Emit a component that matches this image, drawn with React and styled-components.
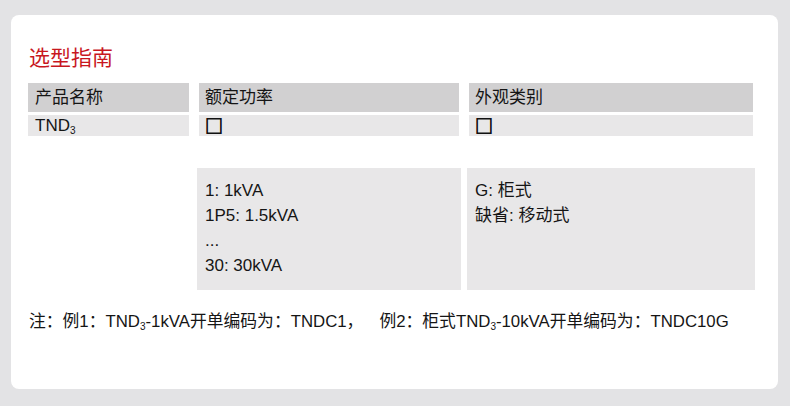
import React from "react";
import styled, { createGlobalStyle } from "styled-components";

const Global = createGlobalStyle`
  html, body {
    margin: 0;
    padding: 0;
    background: #e3e3e5;
  }
  body {
    font-family: "Liberation Sans", "Noto Sans CJK SC", sans-serif;
    color: #151515;
  }
`;

const Page = styled.div`
  width: 790px;
  height: 406px;
  box-sizing: border-box;
  padding: 15px 12px 17px 11px;
`;

const Card = styled.div`
  height: 100%;
  box-sizing: border-box;
  background: #fff;
  border-radius: 8px;
  padding: 28px 25px 0 17px;
`;

const Title = styled.h2`
  margin: 0 0 14px 1px;
  font-size: 21px;
  line-height: 26px;
  font-weight: normal;
  color: #c8171e;
  font-family: "Noto Sans CJK SC", sans-serif;
`;

const Table = styled.div`
  display: grid;
  grid-template-columns: 161px 260px 284px;
  column-gap: 10px;
  row-gap: 3px;
`;

const Cell = styled.div`
  background: ${(p) => (p.head ? "#d1d0d1" : "#e8e7e8")};
  height: ${(p) => (p.head ? "29px" : "21px")};
  line-height: ${(p) => (p.head ? "29px" : "21px")};
  padding-left: ${(p) => (p.first ? "7px" : "6px")};
  font-size: 17px;
  white-space: nowrap;
`;

const Sub = styled.sub`
  font-size: 10px;
  line-height: 0;
  vertical-align: -3px;
`;

const Check = styled.span`
  font-family: "Noto Sans CJK SC", sans-serif;
  font-size: 18px;
  color: #111;
  -webkit-text-stroke: 0.8px #111;
`;

const Options = styled.div`
  display: grid;
  grid-template-columns: 161px 260px 284px;
  column-gap: 10px;
  margin-top: 32px;
`;

const OptionBox = styled.div`
  grid-column: ${(p) => p.col};
  margin: 0 -2px;
  height: 122px;
  box-sizing: border-box;
  background: #e8e7e8;
  padding: 10px 8px 0;
  font-size: 17px;
  line-height: 25px;
`;

const Note = styled.p`
  margin: 20px 0 0 1px;
  font-size: 16.8px;
  line-height: 24px;
  white-space: nowrap;
`;

const Gap = styled.span`
  display: inline-block;
  width: 16px;
`;

const TND = () => (
  <>
    TND<Sub>3</Sub>
  </>
);

export default function App() {
  return (
    <Page>
      <Global />
      <Card>
        <Title>选型指南</Title>
        <Table>
          <Cell head first>产品名称</Cell>
          <Cell head>额定功率</Cell>
          <Cell head>外观类别</Cell>
          <Cell first>
            <TND />
          </Cell>
          <Cell>
            <Check>□</Check>
          </Cell>
          <Cell>
            <Check>□</Check>
          </Cell>
        </Table>
        <Options>
          <OptionBox col={2}>
            <div>1: 1kVA</div>
            <div>1P5: 1.5kVA</div>
            <div>...</div>
            <div>30: 30kVA</div>
          </OptionBox>
          <OptionBox col={3}>
            <div>G: 柜式</div>
            <div>缺省: 移动式</div>
          </OptionBox>
        </Options>
        <Note>
          注：例1：<TND />-1kVA开单编码为：TNDC1，<Gap />例2：柜式<TND />-10kVA开单编码为：TNDC10G
        </Note>
      </Card>
    </Page>
  );
}
